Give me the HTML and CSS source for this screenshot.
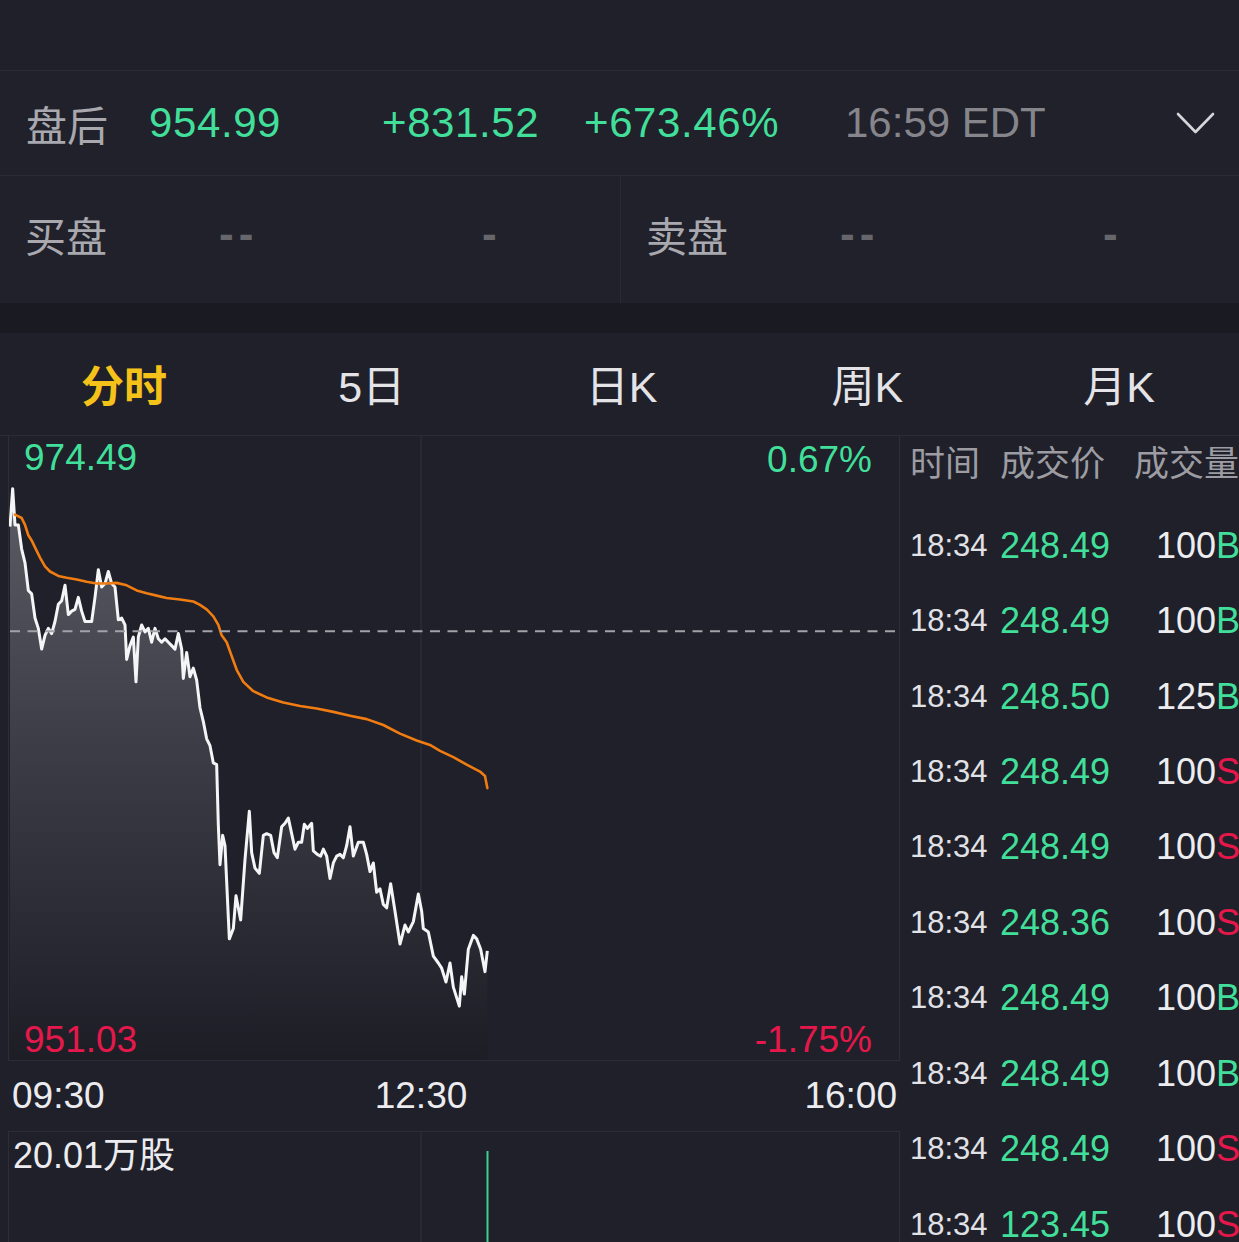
FILE: index.html
```html
<!DOCTYPE html>
<html lang="zh">
<head>
<meta charset="utf-8">
<title>分时</title>
<link rel="stylesheet" href="styles.css">
</head>
<body>
<div class="page">
  <div class="topbar"></div>

  <div class="quote-row">
    <span class="lbl">盘后</span>
    <span class="up num">954.99</span>
    <span class="up num">+831.52</span>
    <span class="up num">+673.46%</span>
    <span class="time">16:59 EDT</span>
    <svg class="chev" width="40" height="24" viewBox="0 0 40 24"><polyline points="2,3 19.5,21 37,3" fill="none" stroke="#d6d6da" stroke-width="2.6" stroke-linecap="round" stroke-linejoin="round"/></svg>
  </div>

  <div class="book-row">
    <div class="book-half">
      <span class="lbl">买盘</span>
      <span class="dash2">--</span>
      <span class="dash1">-</span>
    </div>
    <div class="book-half">
      <span class="lbl">卖盘</span>
      <span class="dash2">--</span>
      <span class="dash1">-</span>
    </div>
  </div>

  <div class="gap"></div>

  <div class="tabs">
    <span class="tab active">分时</span>
    <span class="tab">5日</span>
    <span class="tab">日K</span>
    <span class="tab">周K</span>
    <span class="tab">月K</span>
  </div>

  <div class="main">
    <div class="chart-col">
      <div class="chart">
        <svg class="chart-svg" viewBox="9 436 890 623" preserveAspectRatio="none">
          <defs>
            <linearGradient id="area" x1="0" y1="0" x2="0" y2="1684" gradientUnits="userSpaceOnUse">
              <stop offset="0" stop-color="#5c5d65"/>
              <stop offset="0.45" stop-color="#3c3d46"/>
              <stop offset="1" stop-color="#1c1d25"/>
            </linearGradient>
          </defs>
          <line x1="421" y1="436" x2="421" y2="1060" stroke="#2b2c36" stroke-width="1.5"/>
          <g transform="translate(0,480) scale(0.33333,0.3444)">
            <polygon fill="url(#area)" points="30,135 38,25 45,130 55,130 65,200 75,240 85,320 95,330 105,400 115,430 125,490 135,450 145,430 155,445 165,410 175,360 185,350 195,305 205,390 215,380 225,375 235,340 245,380 255,410 265,410 275,410 285,340 295,260 305,310 315,300 325,265 335,300 345,310 355,405 365,400 375,420 380,520 390,480 400,455 408,585 415,455 425,420 435,440 445,430 455,470 465,430 475,460 485,470 495,460 505,470 515,480 525,490 535,445 545,490 550,575 560,500 570,570 580,545 590,580 600,660 610,700 620,750 630,770 640,820 650,825 655,1000 660,1115 668,1030 675,1060 688,1330 700,1300 708,1205 715,1240 722,1275 735,1100 748,960 755,1080 765,1125 778,1140 790,1030 800,1025 812,1030 822,1080 832,1095 845,1005 855,995 865,980 875,1025 885,1070 895,1050 905,1050 913,998 922,1010 935,995 940,1075 952,1085 962,1090 970,1070 980,1090 990,1155 1000,1110 1010,1090 1020,1085 1030,1095 1040,1060 1050,1005 1060,1090 1075,1050 1090,1050 1100,1085 1110,1135 1120,1110 1130,1195 1140,1185 1150,1230 1160,1240 1172,1170 1185,1250 1200,1345 1215,1290 1225,1310 1240,1280 1255,1200 1265,1250 1270,1300 1285,1310 1300,1380 1315,1400 1325,1415 1338,1455 1350,1400 1360,1470 1378,1525 1385,1440 1393,1490 1405,1360 1420,1320 1430,1330 1442,1360 1455,1425 1462,1365 1462,1684 30,1684"/>
            <polyline fill="none" stroke="#f5f5f7" stroke-width="3" stroke-linejoin="round" vector-effect="non-scaling-stroke" points="30,135 38,25 45,130 55,130 65,200 75,240 85,320 95,330 105,400 115,430 125,490 135,450 145,430 155,445 165,410 175,360 185,350 195,305 205,390 215,380 225,375 235,340 245,380 255,410 265,410 275,410 285,340 295,260 305,310 315,300 325,265 335,300 345,310 355,405 365,400 375,420 380,520 390,480 400,455 408,585 415,455 425,420 435,440 445,430 455,470 465,430 475,460 485,470 495,460 505,470 515,480 525,490 535,445 545,490 550,575 560,500 570,570 580,545 590,580 600,660 610,700 620,750 630,770 640,820 650,825 655,1000 660,1115 668,1030 675,1060 688,1330 700,1300 708,1205 715,1240 722,1275 735,1100 748,960 755,1080 765,1125 778,1140 790,1030 800,1025 812,1030 822,1080 832,1095 845,1005 855,995 865,980 875,1025 885,1070 895,1050 905,1050 913,998 922,1010 935,995 940,1075 952,1085 962,1090 970,1070 980,1090 990,1155 1000,1110 1010,1090 1020,1085 1030,1095 1040,1060 1050,1005 1060,1090 1075,1050 1090,1050 1100,1085 1110,1135 1120,1110 1130,1195 1140,1185 1150,1230 1160,1240 1172,1170 1185,1250 1200,1345 1215,1290 1225,1310 1240,1280 1255,1200 1265,1250 1270,1300 1285,1310 1300,1380 1315,1400 1325,1415 1338,1455 1350,1400 1360,1470 1378,1525 1385,1440 1393,1490 1405,1360 1420,1320 1430,1330 1442,1360 1455,1425 1462,1365"/>
            <polyline fill="none" stroke="#f07c12" stroke-width="2.6" stroke-linejoin="round" stroke-linecap="round" vector-effect="non-scaling-stroke" points="45,100 65,110 75,130 85,160 95,175 105,195 120,225 135,250 150,265 175,278 200,283 230,288 260,295 290,300 320,300 350,298 380,305 410,320 440,328 470,335 500,342 540,346 580,352 600,362 620,375 640,395 655,420 665,450 680,470 695,510 710,550 730,585 760,612 800,630 850,645 900,655 950,662 1000,672 1050,683 1100,693 1150,710 1200,735 1250,755 1290,768 1320,785 1360,803 1400,825 1440,845 1455,858 1462,893"/>
          </g>
          <line x1="10" y1="631" x2="899" y2="631" stroke="#a2a2a8" stroke-width="2" stroke-dasharray="10 7.5"/>
        </svg>
        <span class="clabel up tl">974.49</span>
        <span class="clabel up tr">0.67%</span>
        <span class="clabel down bl">951.03</span>
        <span class="clabel down br">-1.75%</span>
      </div>
      <div class="axis">
        <span class="ax-l">09:30</span>
        <span class="ax-c">12:30</span>
        <span class="ax-r">16:00</span>
      </div>
      <div class="volume">
        <svg class="vol-svg" viewBox="9 1131 890 111" preserveAspectRatio="none">
          <line x1="421" y1="1131" x2="421" y2="1242" stroke="#2b2c36" stroke-width="1.5"/>
          <line x1="487.5" y1="1150" x2="487.5" y2="1242" stroke="#3ccf8e" stroke-width="2"/>
        </svg>
        <span class="vol-label">20.01万股</span>
      </div>
    </div>

    <div class="trades">
      <div class="trade-head">
        <span class="h-time">时间</span>
        <span class="h-price">成交价</span>
        <span class="h-vol">成交量</span>
      </div>
      <div class="trade-list">
        <div class="trade"><span class="t">18:34</span><span class="p">248.49</span><span class="v">100<b class="b">B</b></span></div>
        <div class="trade"><span class="t">18:34</span><span class="p">248.49</span><span class="v">100<b class="b">B</b></span></div>
        <div class="trade"><span class="t">18:34</span><span class="p">248.50</span><span class="v">125<b class="b">B</b></span></div>
        <div class="trade"><span class="t">18:34</span><span class="p">248.49</span><span class="v">100<b class="s">S</b></span></div>
        <div class="trade"><span class="t">18:34</span><span class="p">248.49</span><span class="v">100<b class="s">S</b></span></div>
        <div class="trade"><span class="t">18:34</span><span class="p">248.36</span><span class="v">100<b class="s">S</b></span></div>
        <div class="trade"><span class="t">18:34</span><span class="p">248.49</span><span class="v">100<b class="b">B</b></span></div>
        <div class="trade"><span class="t">18:34</span><span class="p">248.49</span><span class="v">100<b class="b">B</b></span></div>
        <div class="trade"><span class="t">18:34</span><span class="p">248.49</span><span class="v">100<b class="s">S</b></span></div>
        <div class="trade"><span class="t">18:34</span><span class="p">123.45</span><span class="v">100<b class="s">S</b></span></div>
      </div>
    </div>
  </div>
</div>
</body>
</html>
```

FILE: styles.css
```css
* { box-sizing: border-box; }

html, body {
  margin: 0;
  padding: 0;
  background: #1f2029;
}

body {
  font-family: "Liberation Sans", "Noto Sans CJK SC", sans-serif;
  color: #e8e8ec;
  overflow: hidden;
}

.page {
  width: 1239px;
  height: 1242px;
  overflow: hidden;
  background: #1f2029;
}

.topbar {
  height: 71px;
  border-bottom: 1px solid #2a2b34;
}

.up { color: #41df9a; }
.down { color: #e6184b; }

.quote-row {
  height: 105px;
  border-bottom: 1px solid #2a2b34;
  display: grid;
  grid-template-columns: 123px 233px 202px 261px 1fr 40px;
  align-items: center;
  padding: 0 23px 0 26px;
  font-size: 42px;
  line-height: 42px;
  background: #20212a;
}

.quote-row .num { letter-spacing: 0.6px; }

.lbl {
  color: #a8a8ae;
  font-family: "Noto Sans CJK SC", sans-serif;
  font-size: 41px;
  line-height: 42px;
}

.time { color: #85858b; }

.chev { display: block; }

.book-row {
  height: 127px;
  display: grid;
  grid-template-columns: 620px 1fr;
  background: #20212a;
}

.book-half {
  display: grid;
  grid-template-columns: 194px 263px 1fr;
  align-items: center;
  padding-left: 25px;
  padding-bottom: 12px;
}

.book-half + .book-half {
  border-left: 1px solid #292a33;
}

.dash2, .dash1 {
  color: #66666c;
  font-size: 44px;
  font-weight: bold;
  letter-spacing: 5px;
}

.gap {
  height: 30px;
  background: #1a1b22;
}

.tabs {
  height: 103px;
  display: grid;
  grid-template-columns: repeat(5, 1fr);
  align-items: center;
  border-bottom: 1px solid #2a2b34;
  padding-bottom: 2px;
}

.tab {
  text-align: center;
  font-family: "Liberation Sans", "Noto Sans CJK SC", sans-serif;
  font-size: 43px;
  color: #e4e4e8;
}

.tab:nth-child(3) { padding-left: 4px; }
.tab:nth-child(5) { padding-left: 8px; }

.tab.active {
  color: #f5c21a;
  font-weight: bold;
}

.main {
  display: grid;
  grid-template-columns: 900px 1fr;
}

.chart-col {
  display: flex;
  flex-direction: column;
}

.chart {
  position: relative;
  margin-left: 8px;
  height: 625px;
  border-left: 1px solid #2c2d37;
  border-right: 1px solid #2c2d37;
  border-bottom: 1px solid #2c2d37;
}

.chart-svg {
  display: block;
  width: 100%;
  height: 624px;
}

.clabel {
  position: absolute;
  font-size: 37px;
  line-height: 36px;
}

.tl { left: 15px; top: 4px; }
.tr { right: 27px; top: 6px; }
.bl { left: 15px; top: 586px; }
.br { right: 27px; top: 586px; }

.axis {
  height: 70px;
  display: grid;
  grid-template-columns: 349px 120px 1fr;
  align-items: center;
  padding: 0 3px 0 12px;
  font-size: 37px;
  color: #ececf0;
}

.ax-c { text-align: center; }
.ax-r { text-align: right; }

.volume {
  position: relative;
  margin-left: 8px;
  height: 120px;
  border-top: 1px solid #2c2d37;
  border-left: 1px solid #2c2d37;
  border-right: 1px solid #2c2d37;
}

.vol-svg {
  display: block;
  width: 100%;
  height: 111px;
}

.vol-label {
  position: absolute;
  left: 4px;
  top: 6px;
  font-size: 36px;
  line-height: 36px;
  color: #ececf0;
}

.trades {
  height: 806px;
  overflow: hidden;
}

.trade-head {
  height: 50px;
  padding: 0 0 0 10px;
  display: grid;
  grid-template-columns: 90px 130px 1fr;
  font-family: "Noto Sans CJK SC", sans-serif;
  font-size: 35px;
  line-height: 50px;
  color: #9c9ca2;
}

.h-vol { text-align: right; white-space: nowrap; }

.trade-list {
  padding-top: 22px;
}

.trade {
  height: 75.45px;
  display: grid;
  grid-template-columns: 90px 1fr auto;
  align-items: center;
  padding-left: 10px;
}

.t {
  font-size: 31px;
  color: #e2e2e6;
}

.p {
  font-size: 36px;
  color: #41df9a;
}

.v {
  font-size: 36px;
  color: #ededf0;
  margin-right: -1px;
}

.v b { font-weight: normal; }
.v b.b { color: #41df9a; }
.v b.s { color: #e6184b; }
```
